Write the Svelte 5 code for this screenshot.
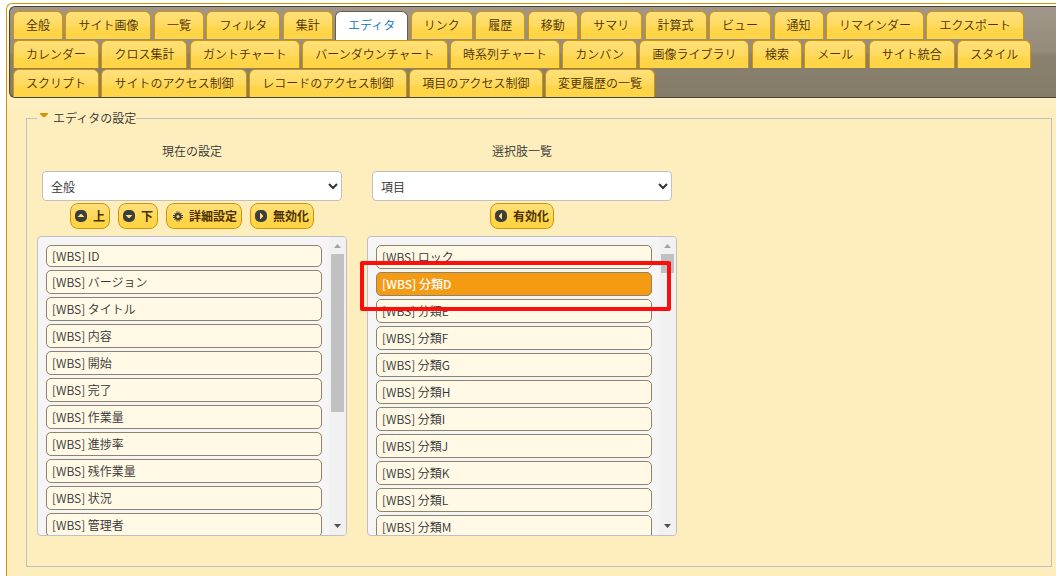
<script lang="ts">
  const tabs = [
    '全般', 'サイト画像', '一覧', 'フィルタ', '集計', 'エディタ', 'リンク', '履歴', '移動',
    'サマリ', '計算式', 'ビュー', '通知', 'リマインダー', 'エクスポート',
    'カレンダー', 'クロス集計', 'ガントチャート', 'バーンダウンチャート', '時系列チャート',
    'カンバン', '画像ライブラリ', '検索', 'メール', 'サイト統合', 'スタイル',
    'スクリプト', 'サイトのアクセス制御', 'レコードのアクセス制御', '項目のアクセス制御', '変更履歴の一覧'
  ];

  const columns = [
    {
      id: 'current',
      title: '現在の設定',
      option: '全般',
      actions: [
        { icon: 'up', label: '上' },
        { icon: 'down', label: '下' },
        { icon: 'gear', label: '詳細設定' },
        { icon: 'right', label: '無効化' }
      ],
      items: ['ID', 'バージョン', 'タイトル', '内容', '開始', '完了', '作業量', '進捗率', '残作業量', '状況', '管理者'],
      thumb: 158
    },
    {
      id: 'source',
      title: '選択肢一覧',
      option: '項目',
      actions: [{ icon: 'left', label: '有効化' }],
      items: ['ロック', '分類D', '分類E', '分類F', '分類G', '分類H', '分類I', '分類J', '分類K', '分類L', '分類M'],
      thumb: 19
    }
  ];

  const arrows: Record<string, string> = {
    up: 'M2.500 7h7L6.500 4h-1z',
    down: 'M2.500 5h7L6.500 8h-1z',
    left: 'M7 2.500v7L4 6.500v-1z',
    right: 'M5 2.500v7l3-3v-1z'
  };

  let activeTab = $state('エディタ');
  let selected = $state('分類D');
</script>

<div class="page">
  <main class="container">
    <nav class="tabs">
      {#each tabs as tab}
        <a href="#{tab}" class="tab" class:active={tab === activeTab} onclick={() => (activeTab = tab)}>{tab}</a>{' '}
      {/each}
    </nav>

    <fieldset class="settings">
      <legend>
        <svg class="toggle" viewBox="0 0 8 5" aria-hidden="true"><path d="M0 0h8v1L5 4H3L0 1z" /></svg>
        エディタの設定
      </legend>

      <div class="columns">
        {#each columns as column}
          <section class="column">
            <label for={column.id}>{column.title}</label>
            <select id={column.id}>
              <option>{column.option}</option>
            </select>

            <div class="actions">
              {#each column.actions as action}
                <button type="button">
                  <svg class="icon" viewBox="0 0 12 12" aria-hidden="true">
                    {#if action.icon === 'gear'}
                      <circle class="ring" cx="7" cy="6.5" r="2.6" />
                      <path
                        class="teeth"
                        d="M6 1.500v2M8 1.500v2M6 9.500v2M8 9.500v2M2 5.500h2M2 7.500h2M10 5.500h2M10 7.500h2M3.500 3l1.500 1.500M10.500 3L9 4.500M3.500 10L5 8.500M10.500 10L9 8.500"
                      />
                    {:else}
                      <rect class="dark" width="12" height="12" rx="5" />
                      <path class="light" d={arrows[action.icon]} />
                    {/if}
                  </svg>
                  {action.label}
                </button>
              {/each}
            </div>

            <div class="list">
              <ol>
                {#each column.items as item}
                  <li class:short={item === 'ID'} class:selected={item === selected}>
                    <button type="button" class="item" onclick={() => (selected = item)}>[WBS] {item}</button>
                  </li>
                {/each}
              </ol>
              <div class="scrollbar" aria-hidden="true">
                <svg viewBox="0 0 17 17"><path d="M5 11h7L8.500 7z" fill="#a3a3a3" /></svg>
                <div class="thumb" style="height: {column.thumb}px"></div>
                <svg viewBox="0 0 17 17"><path d="M5 6h7l-3.500 4z" fill="#505050" /></svg>
              </div>
              {#if column.id === 'source'}
                <div class="marker"></div>
              {/if}
            </div>
          </section>
        {/each}
      </div>
    </fieldset>
  </main>
</div>

<style>
  :global(body) {
    margin: 0;
    background: #fff;
  }

  .page {
    display: flex;
    box-sizing: border-box;
    min-height: 100vh;
    padding: 3px 0 0 6px;
    overflow: hidden;
    color: #333;
    font: 350 12px/18px "Noto Sans CJK JP", sans-serif;
  }

  .container {
    flex: 1;
    min-width: 0;
    padding: 2px 0 0 2px;
    border: solid #d19405;
    border-width: 1px 0 0 1px;
    border-radius: 6px 0 0 0;
    background: linear-gradient(#fffef0, #feeebd 110px);
  }

  .tabs {
    padding: 4px 0 0 3px;
    border: 1px solid #494437;
    border-right: 0;
    border-radius: 6px 0 0 6px;
    background: linear-gradient(#a0978a, #958b7b 50%, #8b816f 54%, #857b69);
    font-size: 11px;
    line-height: 0;
  }

  .tab {
    display: inline-block;
    box-sizing: border-box;
    height: 28px;
    margin-bottom: 1px;
    padding: 0 12px;
    border: 1px solid #d19405;
    border-bottom: 0;
    border-radius: 6px 6px 0 0;
    background: linear-gradient(#ffe07a, #ffda5e 55%, #ffd54a 60%, #ffd445);
    color: #4c3000;
    font-size: 12px;
    line-height: 26px;
    text-decoration: none;
    vertical-align: top;
  }

  .tab:nth-child(n + 27) {
    margin-bottom: 0;
  }

  .tab.active {
    height: 29px;
    margin-bottom: 0;
    border-color: #655e4e;
    background: #fff;
    color: #0074c7;
  }

  .settings {
    min-width: 0;
    margin: 11px 4px 8px 17px;
    padding: 14px 10px 30px;
    border: 1px solid #c0c0c0;
  }

  legend {
    display: flex;
    gap: 5px;
    padding: 0 0 0 3px;
  }

  .toggle {
    width: 8px;
    height: 5px;
    margin-top: 4px;
    fill: #d19405;
  }

  .columns {
    display: flex;
    gap: 20px;
  }

  .column {
    display: flex;
    flex-direction: column;
    align-items: center;
    width: 310px;
  }

  label {
    margin-bottom: 10px;
    line-height: 20px;
  }

  select {
    width: 300px;
    height: 30px;
    padding: 0 4px;
    border: 1px solid #c0c0c0;
    border-radius: 4px;
    background-color: #fff;
    color: #333;
    font: inherit;
  }

  .actions {
    display: flex;
    gap: 8px;
    margin: 2px 0 7px;
  }

  .actions button {
    display: flex;
    align-items: center;
    gap: 6px;
    height: 26px;
    padding: 0 4px;
    border: 1px solid #d19405;
    border-radius: 8px;
    background: linear-gradient(#ffe07a, #ffda5e 50%, #ffd54a 60%, #ffd445);
    color: #4c3000;
    font: inherit;
    font-weight: bold;
  }

  .icon {
    width: 12px;
    height: 12px;
  }

  .dark {
    fill: #3d3d3d;
  }

  .light {
    fill: #ffe27d;
  }

  .ring,
  .teeth {
    fill: none;
    stroke: #3d3d3d;
    stroke-width: 2;
  }

  .teeth {
    stroke-width: 1;
  }

  .list {
    position: relative;
    display: flex;
    box-sizing: border-box;
    width: 100%;
    height: 300px;
    border: 1px solid #c0c0c0;
    border-radius: 4px;
    background: #f5f5f5;
  }

  ol {
    display: flex;
    flex: 1;
    flex-direction: column;
    gap: 3px;
    margin: 0;
    padding: 8px 7px 0 8px;
    overflow: hidden;
    list-style: none;
  }

  li {
    flex: none;
    box-sizing: border-box;
    height: 24px;
    border: 1px solid #8e846b;
    border-radius: 5px;
    background: #fff9e5;
  }

  li.short {
    height: 22px;
  }

  li.selected {
    background: #f49a13;
  }

  .item {
    display: block;
    width: 100%;
    height: 100%;
    padding: 0 5px;
    border: 0;
    background: none;
    color: inherit;
    font: inherit;
    text-align: left;
  }

  .selected .item {
    color: #fff;
    font-weight: 500;
  }

  .scrollbar {
    display: flex;
    flex-direction: column;
    align-items: center;
    width: 17px;
    border-radius: 0 3px 3px 0;
    background: #f1f1f1;
  }

  .scrollbar svg {
    width: 17px;
    height: 17px;
  }

  .scrollbar svg:last-child {
    margin-top: auto;
  }

  .thumb {
    width: 13px;
    background: #c1c1c1;
  }

  .marker {
    position: absolute;
    top: 24px;
    right: 5px;
    left: -8px;
    height: 42px;
    border: 4px solid #fe0d0d;
    border-radius: 2px;
    pointer-events: none;
  }
</style>
